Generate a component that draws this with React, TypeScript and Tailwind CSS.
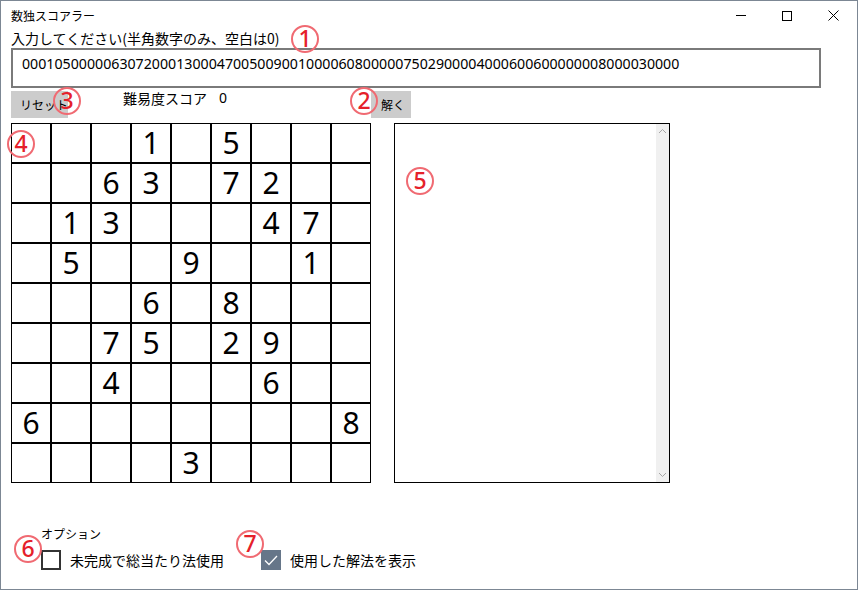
import React from "react";

const PUZZLE =
  "000105000006307200013000470050090010000608000007502900004000600600000008000030000";

const jp = { fontFamily: '"Noto Sans CJK JP", "Noto Sans", sans-serif' };
const num = { fontFamily: '"Noto Sans", "Noto Sans CJK JP", sans-serif' };

function Mark({ n, x, y }: { n: string; x: number; y: number }) {
  return (
    <div
      className="absolute w-[28px] h-[28px] rounded-full border-2 border-[#f06a72] flex items-center justify-center text-[#e5202a] text-[23px] font-medium leading-none"
      style={{ left: x - 14, top: y - 14, ...num }}
    >
      <span className="-mt-[1px]">{n}</span>
    </div>
  );
}

export default function App() {
  const cells = PUZZLE.split("");
  return (
    <div
      className="relative w-[858px] h-[590px] bg-white border-l border-r border-b border-t border-[#7c8794] box-border overflow-hidden text-black"
      style={jp}
    >
      {/* title bar */}
      <div className="h-[29px] flex items-center pl-[10px] relative">
        <span className="text-[12px] leading-none">数独スコアラー</span>
        <div className="absolute right-0 top-0 h-[29px] flex">
          <div className="w-[46px] h-[29px] flex items-center justify-center">
            <div className="w-[10px] h-[1px] bg-black" />
          </div>
          <div className="w-[46px] h-[29px] flex items-center justify-center">
            <div className="w-[10px] h-[10px] border border-black" />
          </div>
          <div className="w-[46px] h-[29px] flex items-center justify-center mr-[1px]">
            <svg width="11" height="11" viewBox="0 0 11 11">
              <path d="M0.5 0.5 L10.5 10.5 M10.5 0.5 L0.5 10.5" stroke="#000" strokeWidth="1" />
            </svg>
          </div>
        </div>
      </div>

      <div className="pl-[10px]">
        <div className="h-[17px] text-[14px] leading-[17px]">入力してください(半角数字のみ、空白は0)</div>
        <div className="mt-[1px] w-[810px] h-[40px] border-2 border-[#7a7a7a] pl-[9px] pt-[4px] text-[14.2px] leading-[20px]" style={num}>
          {PUZZLE}
        </div>

        <div className="mt-[3px] h-[27px] flex items-center">
          <div className="w-[57px] h-[27px] bg-[#cccccc] flex items-center pl-[9px] text-[12px]">リセット</div>
          <div className="ml-[55px] text-[14px] leading-none -mt-[13px] flex">
            <span>難易度スコア</span>
            <span className="ml-[12px]" style={num}>0</span>
          </div>
          <div className="ml-auto mr-[446px] w-[40px] h-[27px] bg-[#cccccc] flex items-center pl-[10px] text-[12px]">解く</div>
        </div>

        <div className="mt-[5px] flex">
          <div className="grid grid-cols-9 w-[360px] h-[360px]">
            {cells.map((c, i) => (
              <div
                key={i}
                className="w-[40px] h-[40px] border border-black box-border flex items-center justify-center text-[30px] leading-none"
                style={num}
              >
                {c === "0" ? "" : c}
              </div>
            ))}
          </div>
          <div className="ml-[23px] w-[276px] h-[360px] border-[1.5px] border-black box-border flex justify-end">
            <div className="w-[13px] h-full bg-[#f0f0f0] flex flex-col items-center justify-between py-[4px]">
              <svg width="9" height="6" viewBox="0 0 9 6">
                <path d="M1 5 L4.5 1.5 L8 5" stroke="#a6a6a6" fill="none" strokeWidth="1" />
              </svg>
              <svg width="9" height="6" viewBox="0 0 9 6">
                <path d="M1 1 L4.5 4.5 L8 1" stroke="#a6a6a6" fill="none" strokeWidth="1" />
              </svg>
            </div>
          </div>
        </div>

        <div className="mt-[43px] pl-[30px]">
          <div className="text-[12px] leading-[16px]">オプション</div>
          <div className="mt-[8px] flex items-center">
            <div className="w-[220px] flex items-center">
              <div className="w-[20px] h-[20px] border-2 border-[#333333] box-border" />
              <span className="ml-[9px] text-[14px] leading-none">未完成で総当たり法使用</span>
            </div>
            <div className="flex items-center">
              <div className="w-[20px] h-[20px] bg-[#667689] flex items-center justify-center">
                <svg width="14" height="11" viewBox="0 0 14 11">
                  <path d="M1 5.5 L5 9.5 L13 1" stroke="#ffffff" fill="none" strokeWidth="1.3" />
                </svg>
              </div>
              <span className="ml-[9px] text-[14px] leading-none">使用した解法を表示</span>
            </div>
          </div>
        </div>
      </div>

      <Mark n="1" x={304} y={38} />
      <Mark n="2" x={363} y={100} />
      <Mark n="3" x={66} y={100} />
      <Mark n="4" x={20} y={143} />
      <Mark n="5" x={419} y={180} />
      <Mark n="6" x={27} y={548} />
      <Mark n="7" x={249} y={543} />
    </div>
  );
}
